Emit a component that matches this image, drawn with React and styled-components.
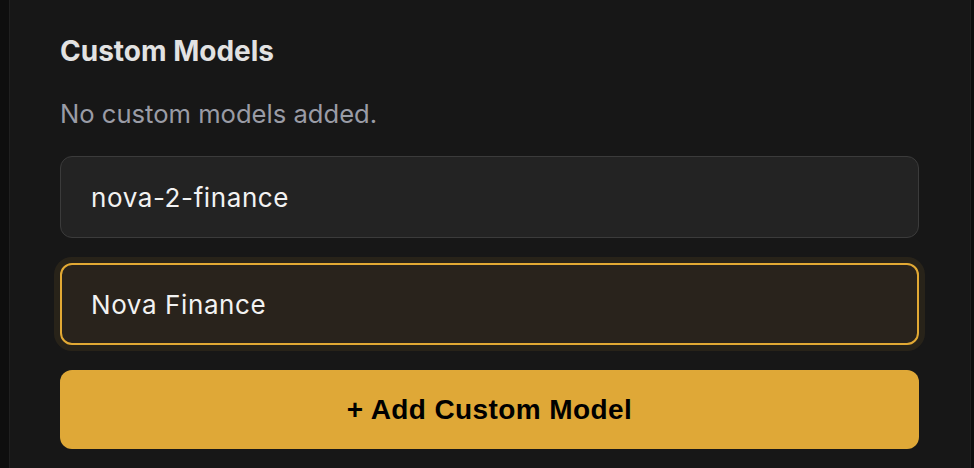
import React from 'react';
import styled, { createGlobalStyle } from 'styled-components';

const GlobalStyle = createGlobalStyle`
  html, body {
    margin     : 0;
    padding    : 0;
    background : #0e0e0e;
  }
  #root {
    min-height : 100vh;
    display    : flex;
  }
`;

const Panel = styled.section`
  box-sizing     : border-box;
  width          : 962px;
  min-height     : 100vh;
  margin-left    : 9px;
  padding        : 35px 51px 0 50px;
  background     : #171717;
  border-left    : 1px solid #202020;
  border-right   : 1px solid #202020;
  display        : flex;
  flex-direction : column;
  font-family    : Inter, "Noto Sans", sans-serif;
`;

const Title = styled.h2`
  margin      : 0;
  font-size   : 28px;
  line-height : 32px;
  font-weight : 700;
  color       : #e2e2e2;
`;

const EmptyNote = styled.p`
  margin      : 31px 0 26px;
  font-size   : 25.6px;
  line-height : 32px;
  color       : #9a9ca6;
`;

const Fields = styled.div`
  display        : flex;
  flex-direction : column;
  gap            : 25px;
`;

const Field = styled.input`
  box-sizing     : border-box;
  width          : 100%;
  height         : 82px;
  padding        : 0 ${p => (p.$active ? 29 : 30)}px;
  border-radius  : 12px;
  border         : ${p => (p.$active ? '2px solid #e2a934' : '1px solid #3b3b3b')};
  background     : ${p => (p.$active ? '#29231c' : '#232323')};
  box-shadow     : ${p => (p.$active ? '0 0 0 6px rgba(224, 169, 54, 0.09)' : 'none')};
  color          : #f2f2f2;
  font-family    : Inter, "Noto Sans", sans-serif;
  font-size      : 26px;
  letter-spacing : 0.6px;
  outline        : 0;
`;

const AddButton = styled.button`
  box-sizing     : border-box;
  width          : 100%;
  height         : 79px;
  border         : none;
  border-radius  : 12px;
  background     : #dfa837;
  color          : #000;
  font-family    : "Liberation Sans", Arial, sans-serif;
  font-weight    : 700;
  font-size      : 28px;
  letter-spacing : 0.4px;
  cursor         : pointer;
`;

export default function App() {
  return (
    <>
      <GlobalStyle />
      <Panel>
        <Title>Custom Models</Title>
        <EmptyNote>No custom models added.</EmptyNote>
        <Fields>
          <Field defaultValue="nova-2-finance" />
          <Field $active defaultValue="Nova Finance" />
          <AddButton type="button">+ Add Custom Model</AddButton>
        </Fields>
      </Panel>
    </>
  );
}
